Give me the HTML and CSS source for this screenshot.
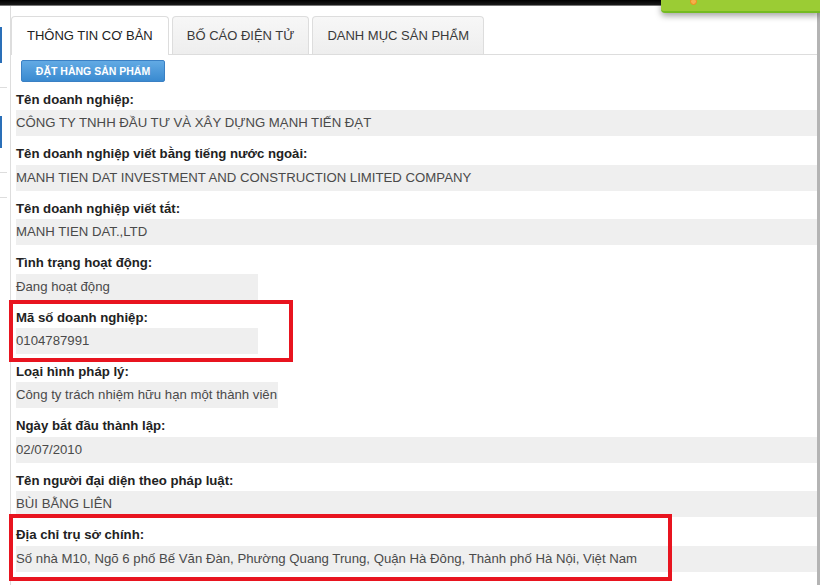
FILE: index.html
```html
<!DOCTYPE html>
<html lang="vi">
<head>
    <meta charset="UTF-8">
    <meta name="viewport" content="width=device-width, initial-scale=1.0">
    <title>Thông tin doanh nghiệp</title>
    <link rel="stylesheet" href="styles.css">
</head>
<body>
    <div class="topbar"></div>
    <div class="popup"><span class="dot"></span></div>

    <div class="page">
        <div class="side">
            <span class="side-blue"></span>
            <span class="side-line"></span>
            <span class="side-blue second"></span>
            <span class="side-line"></span>
            <span class="side-line"></span>
        </div>

        <div class="panel">
            <ul class="tabs">
                <li class="tab active">THÔNG TIN CƠ BẢN</li>
                <li class="tab">BỐ CÁO ĐIỆN TỬ</li>
                <li class="tab">DANH MỤC SẢN PHẨM</li>
            </ul>

            <div class="content">
                <button class="order-btn">ĐẶT HÀNG SẢN PHẨM</button>

                <div class="field">
                    <div class="label">Tên doanh nghiệp:</div>
                    <div class="value">CÔNG TY TNHH ĐẦU TƯ VÀ XÂY DỰNG MẠNH TIẾN ĐẠT</div>
                </div>
                <div class="field">
                    <div class="label">Tên doanh nghiệp viết bằng tiếng nước ngoài:</div>
                    <div class="value">MANH TIEN DAT INVESTMENT AND CONSTRUCTION LIMITED COMPANY</div>
                </div>
                <div class="field">
                    <div class="label">Tên doanh nghiệp viết tắt:</div>
                    <div class="value">MANH TIEN DAT.,LTD</div>
                </div>
                <div class="field">
                    <div class="label">Tình trạng hoạt động:</div>
                    <div class="value short">Đang hoạt động</div>
                </div>
                <div class="field">
                    <div class="label">Mã số doanh nghiệp:</div>
                    <div class="value short">0104787991</div>
                    <span class="mark mark-code"></span>
                </div>
                <div class="field">
                    <div class="label">Loại hình pháp lý:</div>
                    <div class="value fit">Công ty trách nhiệm hữu hạn một thành viên</div>
                </div>
                <div class="field">
                    <div class="label">Ngày bắt đầu thành lập:</div>
                    <div class="value">02/07/2010</div>
                </div>
                <div class="field">
                    <div class="label">Tên người đại diện theo pháp luật:</div>
                    <div class="value">BÙI BẰNG LIÊN</div>
                </div>
                <div class="field">
                    <div class="label">Địa chỉ trụ sở chính:</div>
                    <div class="value">Số nhà M10, Ngõ 6 phố Bế Văn Đàn, Phường Quang Trung, Quận Hà Đông, Thành phố Hà Nội, Việt Nam</div>
                    <span class="mark mark-address"></span>
                </div>
            </div>
        </div>
    </div>
</body>
</html>
```

FILE: styles.css
```css
html, body {
    height: 100%;
}

body {
    margin: 0;
    padding: 0;
    background-color: #fff;
    font-family: "Liberation Sans", Arial, sans-serif;
    overflow: hidden;
    position: relative;
}

.topbar {
    height: 5px;
    background: linear-gradient(#000, #1a1a1a);
    border-bottom: 1px solid #777;
}

/* bout de menu vert en haut a droite */
.popup {
    position: absolute;
    top: 0;
    left: 661px;
    width: 159px;
    height: 11px;
    background-color: #9bcc34;
    border-bottom: 2px solid #74bb22;
    border-bottom-left-radius: 4px;
    box-shadow: 0 3px 6px rgba(0, 0, 0, 0.35);
    z-index: 10;
}

.popup .dot {
    position: absolute;
    top: -2px;
    left: 29px;
    width: 5px;
    height: 5px;
    border-radius: 50%;
    border: 1px solid #f08a1c;
    background-color: #f5b04a;
}

.page {
    display: flex;
    height: calc(100% - 6px);
}

.side {
    width: 10px;
    flex: none;
    display: flex;
    flex-direction: column;
    padding-top: 21px;
}

.side-blue {
    display: block;
    width: 2px;
    height: 36px;
    background-color: #2a6fb8;
}

.side-blue.second {
    height: 32px;
    margin-top: 28px;
}

.side-line {
    display: block;
    width: 7px;
    height: 1px;
    margin-top: 24px;
    background-color: #ddd;
}

.panel {
    flex: 1;
    border-left: 1px solid #ddd;
    border-right: 3px solid #b4b4b4;
    padding-top: 10px;
}

.tabs {
    list-style: none;
    margin: 0;
    padding: 0;
    display: flex;
    gap: 3px;
    border-bottom: 1px solid #ddd;
}

.tab {
    height: 37px;
    line-height: 37px;
    padding: 0 14px;
    font-size: 13px;
    color: #3a3a3a;
    background: linear-gradient(#f7f7f7, #eeeeee);
    border: 1px solid #ddd;
    border-bottom: none;
    border-radius: 4px 4px 0 0;
    margin-bottom: -1px;
}

.tab.active {
    background: #fff;
    color: #222;
    height: 38px;
    padding: 0 15px;
}

.content {
    padding-left: 5px;
    padding-top: 5px;
}

.order-btn {
    display: block;
    margin-left: 5px;
    width: 144px;
    height: 22px;
    padding: 0;
    font-family: "Liberation Sans", Arial, sans-serif;
    font-size: 10.5px;
    font-weight: bold;
    color: #fff;
    background: linear-gradient(#62aae4, #3a8ad0);
    border: 1px solid #3a80c4;
    border-radius: 2px;
    cursor: pointer;
}

.field {
    position: relative;
}

.label {
    box-sizing: border-box;
    height: 28.4px;
    padding-top: 8px;
    line-height: 20px;
    font-size: 13.2px;
    font-weight: bold;
    color: #222;
}

.value {
    height: 26px;
    line-height: 26px;
    padding-left: 0;
    font-size: 13.2px;
    color: #4a4a4a;
    background-color: #efefef;
    white-space: nowrap;
}

.value.short {
    width: 242px;
}

.value.fit {
    display: inline-block;
    padding-right: 1px;
}

/* cadres rouges d'annotation */
.mark {
    position: absolute;
    border: 4px solid #e8141f;
    pointer-events: none;
}

.mark-code {
    top: 0;
    left: -7px;
    width: 276px;
    height: 54px;
}

.mark-address {
    top: -3px;
    left: -7px;
    width: 655px;
    height: 59px;
}
```
